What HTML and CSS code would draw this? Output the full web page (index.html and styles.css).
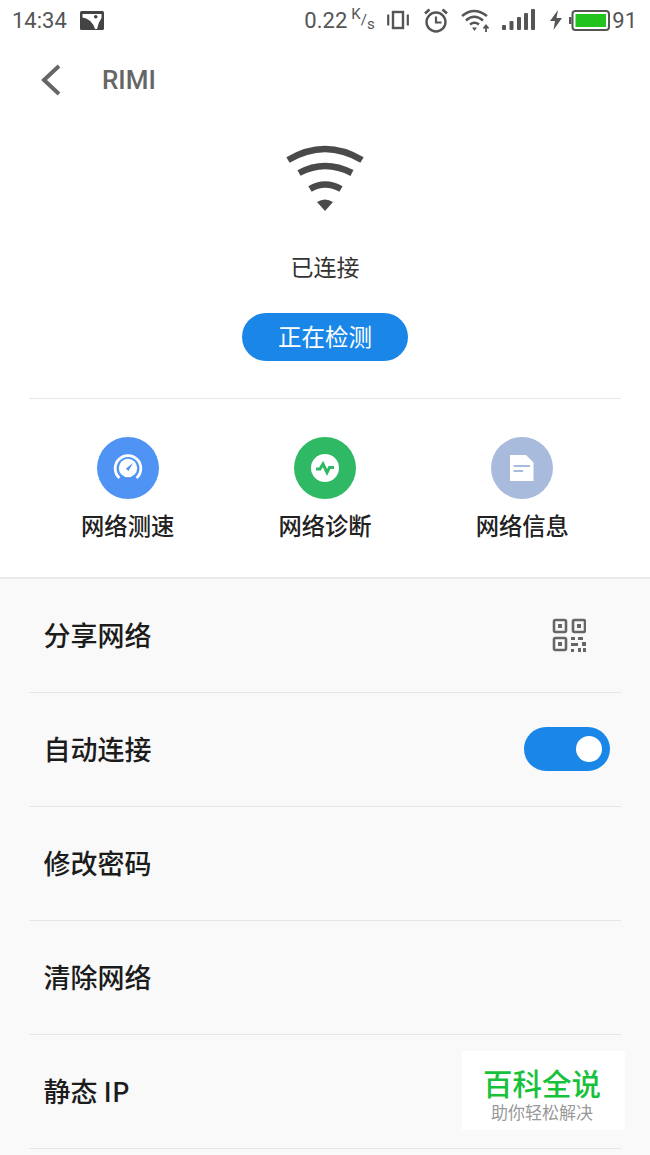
FILE: index.html
```html
<!DOCTYPE html>
<html lang="zh-CN">
<head>
    <meta charset="UTF-8">
    <meta name="viewport" content="width=device-width, initial-scale=1.0">
    <title>RIMI</title>
    <link rel="stylesheet" href="styles.css">
</head>
<body>
    <div class="top">
        <!-- Status bar -->
        <div class="status-bar">
            <div class="status-left">
                <span class="clock">14:34</span>
                <svg class="pic-icon" width="24" height="19" viewBox="0 0 24 19">
                    <rect width="24" height="19" rx="1.5" fill="#444"/>
                    <path d="M2.500 3H21.500V7Q18 12 17 18H15Q12 8 2.500 6.500Z" fill="#fff"/>
                    <circle cx="15.700" cy="5.700" r="1.800" fill="#444"/>
                </svg>
            </div>
            <div class="status-right">
                <span class="speed">0.22</span>
                <span class="speed-unit"><sup>K</sup>/<sub>s</sub></span>
                <svg class="st-vibrate" width="22" height="20" viewBox="0 0 22 20" fill="none" stroke="#555">
                    <rect x="6" y="2" width="10" height="16" stroke-width="2.4"/>
                    <path d="M1.2 4.5V15.5M20.8 4.5V15.5" stroke-width="2.2"/>
                </svg>
                <svg class="st-alarm" width="26" height="25" viewBox="0 0 26 25" fill="none" stroke="#555" stroke-width="2.4">
                    <circle cx="13" cy="14" r="9.5"/>
                    <path d="M13 8.5V14.5H18.5" stroke-width="2.2"/>
                    <path d="M2 5.5L6.5 1.5M24 5.5L19.5 1.5" stroke-width="2.6"/>
                </svg>
                <svg class="st-wifi" width="30" height="24" viewBox="0 0 30 24" fill="none" stroke="#555" stroke-width="2.4">
                    <path d="M1 8 Q13 -2 26 8"/>
                    <path d="M5 12.5 Q13 5 22 12.5"/>
                    <path d="M9 16.5 Q13.5 13 18 16.5"/>
                    <path d="M11 19.5H16L13.5 23Z" fill="#555" stroke="none"/>
                    <path d="M25 24V18M22.500 20.500L25 17.500L27.500 20.500" stroke-width="1.800"/>
                </svg>
                <svg class="st-signal" width="33" height="22" viewBox="0 0 33 22" fill="#555">
                    <rect x="0" y="16" width="4" height="5" rx="1"/>
                    <rect x="7.500" y="12" width="4" height="9" rx="1"/>
                    <rect x="15" y="8" width="4" height="13" rx="1"/>
                    <rect x="22" y="4" width="4" height="17" rx="1"/>
                    <rect x="29" y="0" width="4" height="21" rx="1"/>
                </svg>
                <svg class="st-bolt" width="12" height="20" viewBox="0 0 12 20" fill="#555">
                    <path d="M8 0L0 11H5L3.500 20L12 8H6.500Z"/>
                </svg>
                <svg class="st-battery" width="41" height="21" viewBox="0 0 41 21">
                    <rect x="0" y="7" width="2.500" height="7" fill="#555"/>
                    <rect x="3.500" y="1" width="36.500" height="19" rx="3" fill="none" stroke="#555" stroke-width="2"/>
                    <rect x="6.500" y="4" width="30.500" height="13" fill="#22c21f"/>
                </svg>
                <span class="level">91</span>
            </div>
        </div>

        <!-- Title bar -->
        <div class="toolbar">
            <svg class="back" width="22" height="32" viewBox="0 0 22 32" fill="none" stroke="#666" stroke-width="4">
                <path d="M19 2L4 16L19 30"/>
            </svg>
            <span class="toolbar-title">RIMI</span>
        </div>

        <!-- Connection state -->
        <div class="hero">
            <svg class="hero-wifi" width="82" height="69" viewBox="0 0 82 69" fill="none" stroke="#4a4a4a">
                <path d="M4 17 Q41 -5 78 17" stroke-width="6.500"/>
                <path d="M15 30 Q41 16 68 30" stroke-width="6.500"/>
                <path d="M26 46 Q41 37 57 46" stroke-width="6.500"/>
                <path d="M33 59 Q41 54 49 59 L41 68 Z" fill="#4a4a4a" stroke="none"/>
            </svg>
            <div class="hero-state">已连接</div>
            <button class="check-btn">正在检测</button>
        </div>

        <div class="divider"></div>

        <!-- Shortcuts -->
        <div class="actions">
            <div class="action">
                <div class="action-circle circle-blue">
                    <svg width="30" height="30" viewBox="0 0 30 30">
                        <path d="M6.500 25 A12.800 12.800 0 1 1 23.500 25" fill="none" stroke="#fff" stroke-width="2.800"/>
                        <circle cx="15" cy="15" r="9.200" fill="#fff"/>
                        <path d="M12.800 15.800 L20 10 L15.500 18 Z" fill="#4f94f5"/>
                    </svg>
                </div>
                <div class="action-label">网络测速</div>
            </div>
            <div class="action">
                <div class="action-circle circle-green">
                    <svg width="30" height="30" viewBox="0 0 30 30">
                        <circle cx="15" cy="15" r="14" fill="#fff"/>
                        <path d="M6 16H10L13 11L17 19.500L19.500 14.500H24" fill="none" stroke="#2fb964" stroke-width="3"/>
                    </svg>
                </div>
                <div class="action-label">网络诊断</div>
            </div>
            <div class="action">
                <div class="action-circle circle-grey">
                    <svg width="24" height="26" viewBox="0 0 24 26">
                        <path d="M0 0H16L23.500 7.500V26H0Z" fill="#fff"/>
                        <path d="M3.500 11H20" stroke="#a9bbdc" stroke-width="2"/>
                        <path d="M3.500 16H13" stroke="#a9bbdc" stroke-width="2"/>
                    </svg>
                </div>
                <div class="action-label">网络信息</div>
            </div>
        </div>
    </div>

    <!-- Settings list -->
    <div class="settings">
        <div class="row">
            <span class="row-label">分享网络</span>
            <svg class="qr" width="34" height="34" viewBox="0 0 34 34" fill="none" stroke="#666" stroke-width="2.600">
                <rect x="2" y="2" width="12" height="12" rx="1.500"/>
                <rect x="21" y="2" width="12" height="12" rx="1.500"/>
                <rect x="2" y="20" width="12" height="12" rx="1.500"/>
                <g fill="#666" stroke="none">
                    <rect x="6" y="6" width="4" height="4"/>
                    <rect x="25" y="6" width="4" height="4"/>
                    <rect x="6" y="24" width="4" height="4"/>
                    <rect x="19" y="19" width="4" height="3"/>
                    <rect x="26" y="19" width="5" height="3"/>
                    <rect x="19" y="25" width="7" height="3"/>
                    <rect x="30" y="24" width="4" height="4"/>
                    <rect x="19" y="31" width="3" height="3"/>
                    <rect x="26" y="30" width="3" height="4"/>
                    <rect x="31" y="30" width="3" height="4"/>
                </g>
            </svg>
        </div>
        <div class="row">
            <span class="row-label">自动连接</span>
            <div class="toggle"><div class="toggle-knob"></div></div>
        </div>
        <div class="row"><span class="row-label">修改密码</span></div>
        <div class="row"><span class="row-label">清除网络</span></div>
        <div class="row"><span class="row-label">静态 IP</span></div>
    </div>

    <!-- Watermark -->
    <div class="watermark">
        <div class="watermark-title">百科全说</div>
        <div class="watermark-sub">助你轻松解决</div>
    </div>
</body>
</html>
```

FILE: styles.css
```css
/* Page */
html, body {
    margin: 0;
    padding: 0;
    height: 1155px;
    overflow: hidden;
}

body {
    position: relative;
    font-family: "Noto Sans CJK SC", "Noto Sans", sans-serif;
    background-color: #f9f9f9;
    color: #222;
}

.top {
    background-color: #fff;
}

/* Status bar */
.status-bar {
    height: 40px;
    display: flex;
    justify-content: space-between;
    align-items: center;
    padding: 0 13px 0 12px;
    color: #555;
    font-family: Roboto, sans-serif;
    font-size: 22px;
}

.status-left, .status-right {
    display: flex;
    align-items: center;
}

.pic-icon {
    margin-left: 13px;
}

.speed-unit {
    font-size: 15px;
    margin-left: 4px;
    width: 21px;
    line-height: 20px;
    white-space: nowrap;
}

.speed-unit sup, .speed-unit sub {
    font-size: 15px;
    line-height: 0;
}

.st-vibrate { margin-left: 15px; }
.st-alarm { margin-left: 14px; }
.st-wifi { margin-left: 12px; }
.st-signal { margin-left: 11px; }
.st-bolt { margin-left: 15px; }
.st-battery { margin-left: 7px; }
.level { margin-left: 2px; }

/* Title bar */
.toolbar {
    height: 80px;
    display: flex;
    align-items: center;
    padding-left: 40px;
}

.toolbar-title {
    margin-left: 40px;
    font-family: Roboto, sans-serif;
    font-size: 26px;
    font-weight: 500;
    color: #666;
}

/* Connection state */
.hero {
    display: flex;
    flex-direction: column;
    align-items: center;
    padding-top: 23px;
}

.hero-state {
    margin-top: 37px;
    font-size: 23px;
    line-height: 34px;
    color: #333;
}

.check-btn {
    margin-top: 30px;
    width: 166px;
    height: 48px;
    border: none;
    border-radius: 24px;
    background-color: #1a87e8;
    color: #fff;
    font-family: inherit;
    font-size: 23.5px;
    padding: 0 0 2px;
}

.divider {
    margin: 37px 29px 0;
    height: 1px;
    background-color: #e8e8e8;
}

/* Shortcuts */
.actions {
    display: grid;
    grid-template-columns: repeat(3, 1fr);
    margin: 0 29px;
    padding: 38px 0 35px;
}

.action {
    display: flex;
    flex-direction: column;
    align-items: center;
}

.action-circle {
    width: 62px;
    height: 62px;
    border-radius: 50%;
    display: flex;
    justify-content: center;
    align-items: center;
}

.circle-blue { background-color: #4f94f5; }
.circle-green { background-color: #2fb964; }
.circle-grey { background-color: #a9bbdc; }

.action-label {
    margin-top: 9px;
    font-size: 23.3px;
    line-height: 34px;
    font-weight: 500;
    color: #222;
}

/* Settings list */
.settings {
    border-top: 2px solid #e9e9e9;
    background-color: #f9f9f9;
}

.row {
    height: 111px;
    margin: 0 29px;
    padding: 0 11px 2px 14.5px;
    border-bottom: 1px solid #e6e6e6;
    display: flex;
    justify-content: space-between;
    align-items: center;
}

.row-label {
    font-size: 27px;
    font-weight: 500;
    color: #1c1c1c;
}

.qr {
    margin-right: 24px;
}

.toggle {
    width: 86px;
    height: 44px;
    border-radius: 22px;
    background-color: #1a87e8;
    display: flex;
    justify-content: flex-end;
    align-items: center;
    padding-right: 8px;
    box-sizing: border-box;
}

.toggle-knob {
    width: 26px;
    height: 26px;
    border-radius: 50%;
    background-color: #fff;
}

/* Watermark */
.watermark {
    position: absolute;
    left: 462px;
    top: 1051px;
    width: 163px;
    height: 79px;
    background-color: #fff;
    text-align: center;
}

.watermark-title {
    margin: 13px 3px 0 0;
    font-size: 29.5px;
    line-height: 36px;
    font-weight: 500;
    color: #17c23a;
}

.watermark-sub {
    margin-right: 3px;
    font-size: 17px;
    line-height: 24px;
    color: #999;
}
```
